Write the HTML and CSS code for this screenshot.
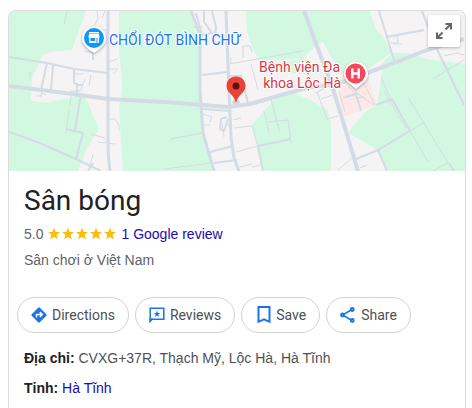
FILE: index.html
```html
<!DOCTYPE html>
<html lang="vi">
<head>
<meta charset="utf-8">
<meta name="viewport" content="width=device-width, initial-scale=1">
<title>Sân bóng</title>
<link rel="stylesheet" href="styles.css">
</head>
<body>
<main class="card">
  <div class="map">
    <svg class="map-art" viewBox="9 11 456 160" preserveAspectRatio="xMidYMid slice" role="img" aria-label="Map">
      <rect class="green" x="-200" y="0" width="900" height="180"/>
      <g class="land">
        <path d="M86 11L80 27L72 50L50 52L43 55L32 78L31 100Q36 103 50 102L70 98L84 94L99 129L87 148L78 171H123L121 140L119 107L122 92V80L119 50V11Z"/>
        <path d="M190 11L200 48L200 90L203 133L213 171H263L258 147L252 125L275 98Q285 92 297 94L327 109L331 123V171H388L378 150L348 133L365 112L377 105L381 80L382 63L392 53L407 53L427 59L465 64V11H370L375 27Q378 33 382 35L392 52L363 73H340L323 42L317 45L303 58L260 62Q250 45 247 30L246 11Z"/>
      </g>
      <path class="green" d="M266 66L303 58L316 66L322 73L300 74L275 72Z"/>
      <path class="hospital" d="M337 80L345 72H366L377 105L343 117Z"/>
      <g class="roads thin">
        <path d="M67 11L64 24M97 11L98 18L94 27M105 11L102 18M108 27V11M30 71V79M43 81L41 96M36 96H42M41 93L46 95M74 74L83 74M91 75L89 85M85 79L81 90M70 91H81M72 91L70 105M69 110L66 133M108 62L117 59M108 69L118 69L114 73M108 30H102M91 134L105 138M98 142L116 144M108 119H115L119 125V131M93 155L89 168M84 51L92 53"/>
        <path d="M170 139L202 133M164 169L211 163M229 64L303 51M243 46L250 46L252 52M243 46V58M251 64L258 90M203 114L212 117L210 122M204 125H210M233 120L241 118M234 128L252 126L258 147M236 152L258 146M240 167L252 164M252 167L260 165M222 123L224 137M231 57V64M264 111L269 133M271 99L280 133M267 122L288 120L291 143"/>
        <path d="M391 43H398L397 36L399 35M393 44H403M381 77L395 110L406 128M408 97L448 163M433 79L464 60M444 56L457 53L464 55M410 131L425 122M410 131L428 162M448 163L433 171M317 92L327 119L338 116M321 99L333 95M339 92L345 112M348 87L374 105M356 98L364 97M361 78L375 105M343 98L357 94M360 168L367 165M352 158L338 170M315 93L336 83M384 91L391 105"/>
      </g>
      <g class="roads mid">
        <path d="M9 57L47 63L74 69L108 73M47 63L41 90M53 64L51 91M74 70V83L77 84V95M77 85H83M93 49V60M81 94L75 130M66 129L83 133L76 159M9 132L40 143L76 159L101 171M93 163L88 171M196 13L202 35L212 33L204 22L204 11M212 11L216 27L215 36M194 27H202M202 75L227 72M203 109L229 111M210 152L233 146M214 163L237 160M229 76H241L248 103M227 117L221 119L220 129L224 131L228 119M228 124L232 126"/>
        <path d="M386 37L424 30M379 11L394 60M422 11L435 45L464 105M376 105L392 99L410 131L378 150L354 160M378 150L387 171M449 163L454 171M258 146L291 139M258 147L263 171M345 97L356 94L361 111"/>
      </g>
      <g class="roads wide">
        <path d="M108 11V145Q108 156 110 171M191 11L200 35V90L203 133L214 171M226 11L229 92L231 137L234 158L239 171"/>
      </g>
      <g class="roads main">
        <path d="M9 86L65 93L108 99L165 102L228 107L250 104L306 88L340 83L370 72L427 50L464 39M304 11L334 92L358 171"/>
      </g>
      <ellipse class="pin-shadow" cx="236" cy="102" rx="4" ry="2"/>
      <path class="pin" d="M236 76.5C230.500 76.500 226.500 80.500 226.500 86C226.500 93 233.500 94 235.200 101Q236 103 236.800 101C238.500 94 245.500 93 245.500 86C245.500 80.500 241.500 76.500 236 76.500Z"/>
      <circle class="pin-dot" cx="236" cy="86" r="3.500"/>
      <g>
        <path class="marker-back" d="M94 26C87 26 82 31 82 38C82 43 85 46 88 49L94 53L100 49C103 46 106 43 106 38C106 31 101 26 94 26Z"/>
        <circle class="shop" cx="94" cy="38" r="10"/>
        <path class="marker-icon" fill-rule="evenodd" d="M89 32H99V33.500H89ZM89 34H99L99.700 37.500H99V43H89V37.500H88.300ZM90.500 38V41H95V38ZM96.500 38V43H97.500V38Z"/>
      </g>
      <g>
        <path class="marker-back" d="M356 62C349 62 344 67 344 74C344 79 347 82 350 84L356 89L362 84C365 82 368 79 368 74C368 67 363 62 356 62Z"/>
        <circle class="hospital-mark" cx="355.500" cy="73.500" r="10"/>
        <path class="marker-icon" d="M351 68.500H353.500V72.200H357.500V68.500H360V78.500H357.500V74.700H353.500V78.500H351Z"/>
      </g>
      <text class="label shop-label" x="109" y="45">CHỔI ĐÓT BÌNH CHỮ</text>
      <text class="label hospital-label" x="340" y="72">Bệnh viện Đa</text>
      <text class="label hospital-label" x="341" y="88">khoa Lộc Hà</text>
    </svg>
    <button class="expand" type="button" aria-label="Expand map">
      <svg width="18" height="18" viewBox="0 0 18 18" aria-hidden="true">
        <path d="M10.500 2H16V7.500M16 2L10.500 7.500M2 10.500V16H7.500M2 16L7.500 10.500"/>
      </svg>
    </button>
  </div>

  <header class="intro">
    <h1>Sân bóng</h1>
    <div class="rating">
      <span>5.0</span>
      <svg class="stars" width="70" height="14" viewBox="0 0 70 14" role="img" aria-label="5 stars">
        <defs><path id="star" d="M7 .8L8.700 5H13L9.600 7.800L10.900 12.500L7 9.800L3.100 12.500L4.400 7.800L1 5H5.300Z"/></defs>
        <use href="#star"/><use href="#star" x="14"/><use href="#star" x="28"/><use href="#star" x="42"/><use href="#star" x="56"/>
      </svg>
      <a href="#reviews">1 Google review</a>
    </div>
    <p class="category">Sân chơi ở Việt Nam</p>
  </header>

  <div class="actions">
    <button class="action" type="button">
      <svg width="16" height="16" viewBox="0 0 16 16" aria-hidden="true">
        <path class="fill" d="M7.200 .7Q8 0 8.800 .7L15.300 7.200Q16 8 15.300 8.800L8.800 15.300Q8 16 7.200 15.300L.7 8.800Q0 8 .7 7.200Z"/>
        <path class="cutout" d="M5.500 10.500V7.500H10M8.800 5L11.300 7.500L8.800 10"/>
      </svg>
      Directions
    </button>
    <button class="action" type="button">
      <svg width="16" height="16" viewBox="0 0 16 16" aria-hidden="true">
        <path class="line thin-line" d="M1.200 14.500V1.200H14.800V12.300H3Z"/>
        <path class="fill" d="M.5 11.500H4L.5 15.500ZM8 3.600L8.900 6H11.200L9.400 7.500L10 9.900L8 8.500L6 9.900L6.600 7.500L4.800 6H7.100Z"/>
      </svg>
      Reviews
    </button>
    <button class="action" type="button">
      <svg width="16" height="16" viewBox="0 0 16 16" aria-hidden="true">
        <path class="line" d="M3.500 0H14.500V14.800L9 12.400L3.500 14.800Z"/>
      </svg>
      Save
    </button>
    <button class="action" type="button">
      <svg width="16" height="16" viewBox="0 0 16 16" aria-hidden="true">
        <path class="line thin-line" d="M12 2.500L2.500 8L12 13.500"/>
        <g class="node"><circle cx="12.300" cy="2.500" r="1.400"/><circle cx="2.500" cy="8" r="1.400"/><circle cx="12.300" cy="13.500" r="1.400"/></g>
      </svg>
      Share
    </button>
  </div>

  <dl class="facts">
    <div><dt>Địa chỉ:</dt> <dd>CVXG+37R, Thạch Mỹ, Lộc Hà, Hà Tĩnh</dd></div>
    <div><dt>Tỉnh:</dt> <dd><a href="#ha-tinh">Hà Tĩnh</a></dd></div>
  </dl>
</main>
</body>
</html>
```
FILE: styles.css
```css
* { box-sizing: border-box; }

body {
  margin: 10px 6px 0 8px;
  background: #fff;
  color: #4d5156;
  font: 14px/20px "Liberation Sans", Arial, sans-serif;
}

.card {
  min-height: calc(100vh - 10px);
  border: 1px solid #dadce0;
  border-bottom: 0;
  border-radius: 8px 8px 0 0;
  overflow: hidden;
}

a { color: #1a0dab; text-decoration: none; }

.map { position: relative; }
.map-art { display: block; width: 100%; height: 160px; }

.green { fill: #d2f8e1; }
.land { fill: #f5f3f4; }
.hospital { fill: #fce8e6; }
.roads { fill: none; stroke: #d3dce4; stroke-linejoin: round; }
.thin { stroke-width: 1; }
.mid { stroke-width: 2; }
.wide { stroke-width: 3; }
.main { stroke-width: 4; }

.pin { fill: #ea4335; }
.pin-dot { fill: #5c1111; }
.pin-shadow { fill: #d5d5d5; }
.marker-back { fill: #fff; filter: drop-shadow(0 1px 1px #0005); }
.marker-icon { fill: #fff; }
.shop { fill: #0a98ff; }
.hospital-mark { fill: #fa4659; }

.label {
  font-family: Roboto, sans-serif;
  font-size: 14px;
  paint-order: stroke;
  stroke: #fff;
  stroke-width: 2px;
  stroke-linejoin: round;
}
.shop-label { fill: #1b73e8; }
.hospital-label { fill: #d93748; text-anchor: end; }

.expand {
  position: absolute;
  top: 4px;
  right: 5px;
  display: grid;
  place-items: center;
  width: 32px;
  height: 32px;
  padding: 0;
  border: 0;
  border-radius: 2px;
  background: #fffffff2;
  box-shadow: 0 1px 3px #0004;
}
.expand path { fill: none; stroke: #666; stroke-width: 2; }

.intro { padding: 12px 15px 0; }

h1 {
  margin: 0;
  color: #202124;
  font: 400 28px/36px Roboto, sans-serif;
}

.rating { display: flex; align-items: center; gap: 4px; margin-top: 5px; }
.rating span, .category { color: #5f6368; }
.stars { fill: #fbbc04; }
.category { margin: 6px 0 0; }

.actions { display: flex; flex-wrap: wrap; gap: 6px; margin-top: 27px; padding: 0 8px; }

.action {
  display: flex;
  align-items: center;
  gap: 5px;
  height: 36px;
  padding: 0 13px;
  border: 1px solid #d2d2d2;
  border-radius: 18px;
  background: #fff;
  color: #4d5156;
  font: 14px/20px Roboto, sans-serif;
}
.action svg { overflow: visible; }
.fill { fill: #1a73e8; }
.line { fill: none; stroke: #1a73e8; stroke-width: 2; }
.thin-line { stroke-width: 1.5; }
.cutout { fill: none; stroke: #fff; stroke-width: 1.5; }
.node { fill: #fff; stroke: #1a73e8; stroke-width: 2; }

.facts { display: grid; gap: 10px; margin: 15px 15px 0; }
dt, dd { display: inline; margin: 0; }
dt { color: #202124; font-weight: 700; }
```
